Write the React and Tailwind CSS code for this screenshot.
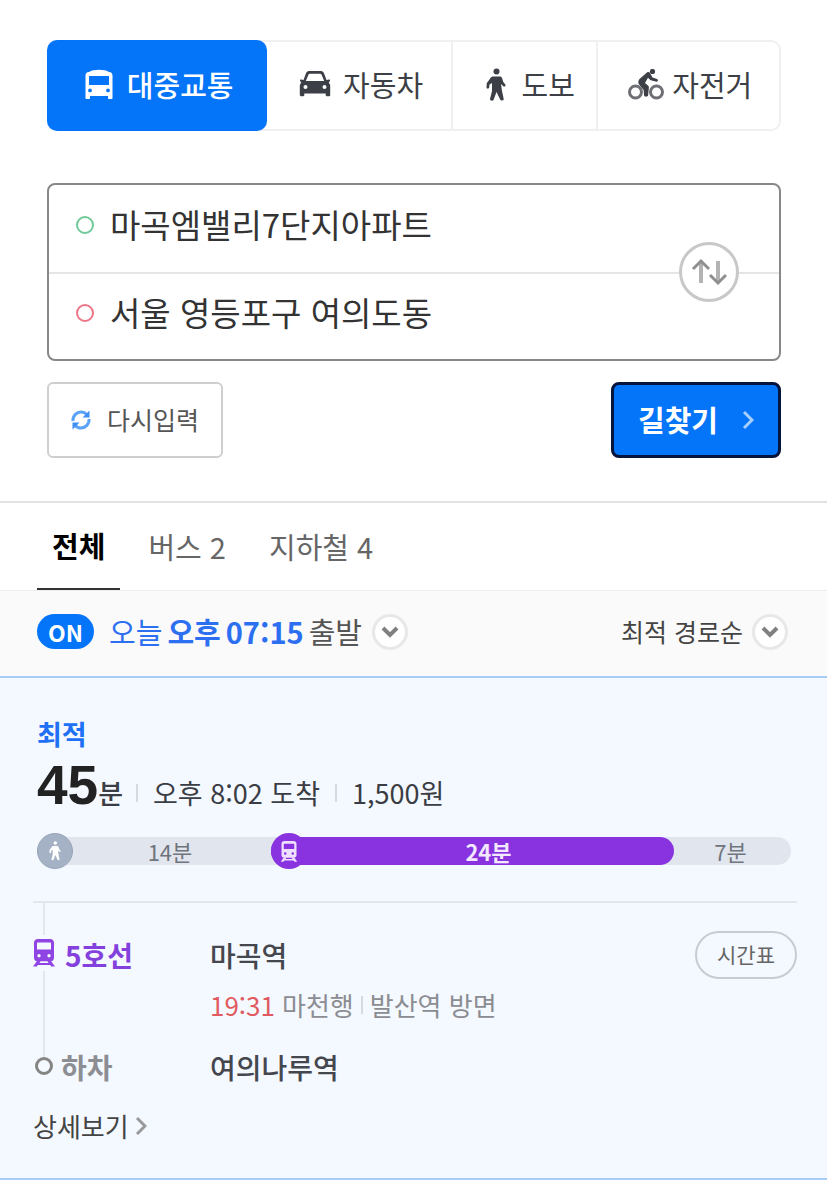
const BusIcon = () => (
  <svg className="w-7 h-8" viewBox="0 0 28 32" fill="currentColor" aria-hidden="true">
    <path
      fillRule="evenodd"
      d="M4 3C6 1.500 10 .8 14 .8s8 .7 10 2.200c2.300.2 3.500 1.500 3.500 3.500V29c0 .7-.4 1-1 1H24c-.6 0-1-.3-1-1v-2H5v2c0 .7-.4 1-1 1H1.500c-.6 0-1-.3-1-1V6.500C.5 4.500 1.700 3.200 4 3zM4 7v9h20V7zM5 19.500a1.900 1.900 0 1 0 0 3.800 1.900 1.900 0 0 0 0-3.800zM23 19.500a1.900 1.900 0 1 0 0 3.800 1.900 1.900 0 0 0 0-3.800z"
    />
  </svg>
);

const CarIcon = () => (
  <svg className="w-8 h-8" viewBox="0 0 32 32" fill="currentColor" aria-hidden="true">
    <path
      fillRule="evenodd"
      d="M7 4.200C7.600 2.500 9 2 11 2h10c2 0 3.400.5 4 2.200l2.500 6.800 2.500-.5c.8 0 1.200.5 1 1.200l-1.300 2.200c1 .7 1.500 1.700 1.500 3V26c0 .8-.4 1.200-1 1.200h-2.500c-.6 0-1-.4-1-1.200v-1.500H5.300V26c0 .8-.4 1.200-1 1.200H1.800c-.6 0-1-.4-1-1.200v-9.100c0-1.300.5-2.300 1.500-3L1 11.700c-.2-.7.2-1.200 1-1.200l2.500.5zM9.500 5.500 6.800 12h18.400l-2.700-6.500c-.3-.6-.8-.8-1.500-.8H11c-.7 0-1.200.2-1.500.8zM6.500 16a2 2 0 1 0 0 4 2 2 0 0 0 0-4zM25.500 16a2 2 0 1 0 0 4 2 2 0 0 0 0-4z"
    />
  </svg>
);

const WalkIcon = ({ className }) => (
  <svg className={className} viewBox="0 0 20 34" fill="currentColor" aria-hidden="true">
    <circle cx="10.500" cy="3.500" r="3" />
    <path d="M7 8.500h7c1 0 1.500.5 2 1.500l1.300 4 2 2.500c.8 1.200-.6 2.700-2 1.700L15 16l1 7 1.700 8c.3 1.500-2.700 2.300-3.400.8L10.500 24l-3 8c-.7 1.500-4 .7-3.500-1L6 23V15l-2.500 1.500-.3 3c-.2 1.500-2.700 1.500-2.700 0l.2-3.800c0-.7.300-1.200 1-1.700L4.500 10c.7-1 1.500-1.500 2.500-1.500z" />
  </svg>
);

const BikeIcon = () => (
  <svg className="w-9 h-8" viewBox="0 0 36 32" fill="none" stroke="currentColor" aria-hidden="true">
    <circle cx="7.500" cy="23" r="6" strokeWidth="3" opacity="0.75" />
    <circle cx="28.500" cy="23" r="6" strokeWidth="3" opacity="0.75" />
    <circle cx="24.500" cy="2.500" r="2.600" fill="currentColor" stroke="none" />
    <path d="M11.500 10 19 3.500c1-.8 2.300-.6 3 .4l2.500 4.500 4.500 1.600c1.600.5 1.200 2.800-.5 2.700l-5.700-1.500c-.6-.2-1-.5-1.300-1L20 8.700l-3 5.300 3 2.500c.7.6 1 1.200.9 2l-.8 8c-.3 1.500-4 1.500-4 0l-.5-5.500-4.100-5c-1.600-1.600-1.600-4 0-6z" fill="currentColor" stroke="none" />
  </svg>
);

const TrainIcon = ({ className }) => (
  <svg className={className} viewBox="0 0 24 28" fill="currentColor" aria-hidden="true">
    <path
      fillRule="evenodd"
      d="M6 0h12c2.500 0 4 1.500 4 4v15c0 2-1.500 3.300-3.500 3.300h-13C3.500 22.300 2 21 2 19V4c0-2.500 1.500-4 4-4zM6 3.500c-.6 0-1 .4-1 1v6h14v-6c0-.6-.4-1-1-1zM7 15a1.700 1.700 0 1 0 0 3.400 1.700 1.700 0 0 0 0-3.400zM17 15a1.700 1.700 0 1 0 0 3.400 1.700 1.700 0 0 0 0-3.400z"
    />
    <path d="M5 22h3.500l-1 2h9l-1-2H19l4 5.500h-3.500L18 26H6l-1.500 1.500H1z" />
  </svg>
);

const SwapIcon = () => (
  <svg className="w-9 h-7" viewBox="0 0 36 28" fill="none" strokeWidth="3" aria-hidden="true">
    <path d="M10 25V4M27 3v21" stroke="#b3b3b3" strokeWidth="4" />
    <path d="M2 11l8-8 8 8M19 17l8 8 8-8" stroke="#8f8f8f" />
  </svg>
);

const RefreshIcon = () => (
  <svg className="w-5 h-5" viewBox="0 0 20 20" fill="none" stroke="#5ba3f9" strokeWidth="3" aria-hidden="true">
    <path d="M2 11C1.500 6 5.500 2 10 2c2.500 0 4.500 1 6 2.800M18 9c.5 5-3.500 9-8 9-2.500 0-4.500-1-6-2.800" />
    <path d="M18.500.5v7h-7zM1.500 19.500v-7h7z" fill="#3f8ff7" stroke="none" />
  </svg>
);

const ChevronRight = ({ className }) => (
  <svg className={className} viewBox="0 0 12 20" fill="none" stroke="currentColor" strokeWidth="3" aria-hidden="true">
    <path d="m2 2 8 8-8 8" />
  </svg>
);

const ChevronCircle = () => (
  <span className="flex w-9 h-9 shrink-0 items-center justify-center rounded-full border-[3px] border-[#e8e8e8] bg-white">
    <svg className="w-[18px] h-3" viewBox="0 0 18 12" fill="none" stroke="#808080" strokeWidth="4" aria-hidden="true">
      <path d="m2 2 7 7 7-7" />
    </svg>
  </span>
);

const Separator = () => <span className="w-[2px] h-[18px] self-center bg-[#d5dae1]" />;

const modes = [
  {
    id: "transit",
    label: "대중교통",
    icon: <BusIcon />,
    style: "gap-[14px] pl-1 -my-[2px] -ml-[2px] rounded-[10px] bg-[#0475f8] font-medium text-white",
  },
  { id: "car", label: "자동차", icon: <CarIcon />, style: "gap-3 pl-1 text-[#3c3f46]" },
  {
    id: "walk",
    label: "도보",
    icon: <WalkIcon className="w-5 h-9" />,
    style: "gap-4 pl-3 border-l-2 border-[#f0f0f0] text-[#3c3f46]",
  },
  { id: "bike", label: "자전거", icon: <BikeIcon />, style: "gap-2 pl-1 border-l-2 border-[#f0f0f0] text-[#3c3f46]" },
];

const places = [
  { id: "start", label: "출발지", value: "마곡엠밸리7단지아파트", dot: "border-[#6fca97]" },
  { id: "goal", label: "도착지", value: "서울 영등포구 여의도동", dot: "border-[#ec7686]" },
];

const filters = [
  { id: "all", label: "전체" },
  { id: "bus", label: "버스 2" },
  { id: "subway", label: "지하철 4" },
];

// share is the drawn length of the segment on the bar
const segments = [
  { id: 1, type: "walk", label: "14분", share: 234 },
  { id: 2, type: "train", label: "24분", share: 403 },
  { id: 3, type: "end", label: "7분", share: 117 },
];

const SearchForm = () => (
  <section className="pl-[47px] pr-[46px] pt-10 pb-[43px]">
    <div className="grid grid-cols-[219fr_184fr_145fr_184fr] h-[91px] rounded-[10px] border-2 border-[#f0f0f0]">
      {modes.map((mode) => (
        <button
          key={mode.id}
          type="button"
          className={`flex items-center justify-center pb-[2px] text-[29px] ${mode.style}`}
        >
          {mode.icon}
          {mode.label}
        </button>
      ))}
    </div>

    <div className="relative mt-[52px] rounded-lg border-2 border-[#888888]">
      {places.map((place, index) => (
        <div
          key={place.id}
          className={`flex items-center gap-4 h-[87px] pl-[27px] pr-28 pb-2 ${index > 0 ? "border-t-2 border-[#e5e5e5]" : ""}`}
        >
          <span className={`w-[18px] h-[18px] shrink-0 rounded-full border-2 ${place.dot}`} />
          <input
            type="text"
            aria-label={place.label}
            defaultValue={place.value}
            className="min-w-0 flex-1 bg-transparent text-[33px] text-[#333333] outline-none"
          />
        </div>
      ))}
      <button
        type="button"
        aria-label="출발지 도착지 바꾸기"
        className="absolute right-10 top-1/2 flex w-[60px] h-[60px] -translate-y-1/2 items-center justify-center rounded-full border-[3px] border-[#c8c8c8] bg-white"
      >
        <SwapIcon />
      </button>
    </div>

    <div className="mt-[21px] flex justify-between">
      <button
        type="button"
        className="flex h-[76px] items-center gap-4 rounded-md border-2 border-[#cfcfcf] px-[22px] text-[25px] text-[#555555]"
      >
        <RefreshIcon />
        다시입력
      </button>
      <button
        type="button"
        className="flex h-[76px] items-center gap-6 rounded-lg border-[3px] border-[#06143c] bg-[#0475f8] px-6 text-[29px] font-bold text-white"
      >
        길찾기
        <ChevronRight className="w-3 h-5 text-[#a8d0fd]" />
      </button>
    </div>
  </section>
);

const RouteBar = () => (
  <div className="mt-[13px] mr-1 flex h-7 items-center rounded-full bg-[#e1e5ed] text-[22px] text-[#70757d]">
    {segments.map((segment) => (
      <div
        key={segment.id}
        style={{ flexGrow: segment.share }}
        className={
          segment.type === "train"
            ? "flex h-7 basis-0 items-center rounded-full bg-[#8833df] font-bold text-[#f3e8fd]"
            : "flex h-7 basis-0 items-center"
        }
      >
        {segment.type === "walk" && (
          <span className="flex w-9 h-9 shrink-0 items-center justify-center rounded-full border border-[#98a5b8] bg-[#a5b1c4] text-white">
            <WalkIcon className="w-3 h-5" />
          </span>
        )}
        {segment.type === "train" && (
          <span className="flex w-9 h-9 shrink-0 items-center justify-center rounded-full bg-[#8833df] text-[#f0e0ff]">
            <TrainIcon className="w-[18px] h-[21px]" />
          </span>
        )}
        <span className="flex-1 pr-1 text-center">{segment.label}</span>
      </div>
    ))}
  </div>
);

const RouteSteps = () => (
  <div className="-ml-1 -mr-[2px] mt-9 border-t-2 border-[#e3e7ec]">
    <div className="flex">
      <div className="flex w-[22px] flex-col items-center">
        <span className="w-[2px] h-8 bg-[#e3e7ec]" />
        <TrainIcon className="my-1 w-6 h-7 shrink-0 text-[#8f45e3]" />
        <span className="w-[2px] flex-1 bg-[#e3e7ec]" />
      </div>
      <div className="ml-[10px] w-[145px] pt-7 text-[28px] leading-[48px] font-bold text-[#8340dc]">5호선</div>
      <div className="flex-1 pt-7 pb-5">
        <div className="flex items-center justify-between">
          <span className="text-[28px] font-medium leading-[48px] text-[#44474d]">마곡역</span>
          <button
            type="button"
            className="h-12 rounded-full border-2 border-[#c8cbd0] px-5 text-[21px] text-[#666666]"
          >
            시간표
          </button>
        </div>
        <div className="mt-2 flex items-center gap-[7px] text-[26px] leading-9 text-[#8b8d92]">
          <span className="text-[#e05a60]">19:31</span>
          마천행
          <Separator />
          발산역 방면
        </div>
      </div>
    </div>
    <div className="flex">
      <div className="flex w-[22px] flex-col items-center">
        <span className="w-[2px] h-[14px] bg-[#e3e7ec]" />
        <span className="w-[18px] h-[18px] rounded-full border-[3px] border-[#858585]" />
      </div>
      <div className="ml-[6px] w-[149px] text-[28px] font-bold leading-[48px] text-[#8c8e93]">하차</div>
      <div className="flex-1 text-[28px] font-medium leading-[48px] text-[#44474d]">여의나루역</div>
    </div>
  </div>
);

const App = () => {
  return (
    <main
      lang="ko"
      className="bg-white font-['Noto_Sans_CJK_KR',sans-serif]"
    >
      <SearchForm />

      <nav className="flex gap-[13px] border-t-2 border-[#e2e2e2] px-[37px]">
        {filters.map((filter, index) => (
          <button
            key={filter.id}
            type="button"
            className={
              index === 0
                ? "h-[87px] border-b-2 border-[#333333] px-[15px] text-[29px] font-bold text-black"
                : "h-[87px] px-[15px] text-[29px] text-[#666666]"
            }
          >
            {filter.label}
          </button>
        ))}
      </nav>

      <div className="flex h-[86px] items-center justify-between border-t border-[#eeeeee] bg-[#fafafa] pl-[37px] pr-[39px] pb-1">
        <div className="flex items-center gap-[15px]">
          <button
            type="button"
            aria-pressed="true"
            className="w-[57px] h-[35px] rounded-full bg-[#0475f8] text-[23px] leading-8 font-bold text-white"
          >
            ON
          </button>
          <button type="button" className="flex items-center gap-[10px] text-[29px] text-[#555555]">
            <span className="flex gap-[5px]">
              <span className="text-[#2c6ff0]">오늘</span>
              <b className="text-[#2c6ff0]">오후</b>
              <b className="text-[#2c6ff0]">07:15</b>
              <span>출발</span>
            </span>
            <ChevronCircle />
          </button>
        </div>
        <label className="relative flex items-center">
          <select
            aria-label="정렬"
            className="appearance-none bg-transparent pr-[46px] text-[25px] text-[#444444] outline-none"
          >
            <option>최적 경로순</option>
          </select>
          <span className="pointer-events-none absolute right-0">
            <ChevronCircle />
          </span>
        </label>
      </div>

      <article className="border-y-2 border-[#a9ccf5] bg-[#f4f8ff] px-8 pt-[38px] pb-[34px]">
        <div className="pl-[5px]">
          <div className="text-[27px] leading-9 font-bold text-[#2070f5]">최적</div>
          <div className="mt-[2px] flex items-baseline text-[27px] leading-[62px] text-[#3a3d43]">
            <strong className="font-['Liberation_Sans',sans-serif] text-[55px] text-[#222222]">45</strong>
            <span className="font-medium">분</span>
            <div className="ml-[13px] flex items-baseline gap-[15px]">
              <Separator />
              오후 8:02 도착
              <Separator />
              1,500원
            </div>
          </div>
          <RouteBar />
          <RouteSteps />
        </div>
        <a href="#detail" className="mt-[17px] ml-px inline-flex items-center gap-[6px] text-[26px] leading-9 text-[#444444]">
          상세보기
          <ChevronRight className="w-3 h-5 text-[#999999]" />
        </a>
      </article>
    </main>
  );
};

export default App;
